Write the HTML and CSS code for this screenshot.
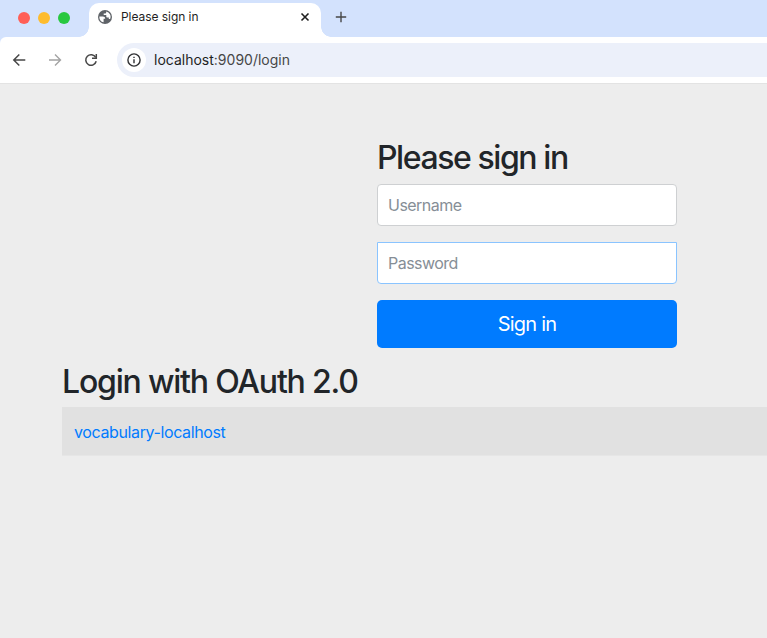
FILE: index.html
```html
<!DOCTYPE html>
<html lang="en">
<head>
<meta charset="utf-8">
<title>Please sign in</title>
<link rel="stylesheet" href="styles.css">
</head>
<body>
<div class="window">
  <header class="tabstrip">
    <div class="lights"><span class="light red"></span><span class="light yellow"></span><span class="light green"></span></div>
    <div class="tab">
      <svg class="globe" width="14" height="14" viewBox="0 0 14 14"><circle cx="7" cy="7" r="7" fill="#5f6368"/><path d="M1.4 6.5h3.4c1.6 0 2.4.9 2.4 2.3H5.6v3.5a5.5 5.5 0 0 1-4.2-5.8zM8.2 1.5v.8c0 .8-.5 1.2-1.3 1.2H5.7v1.4h2.6v1.6c0 .7.5 1.1 1.2 1.1h1.3v1.5h1.3a5.5 5.5 0 0 0-3.9-7.6z" fill="#fff"/></svg>
      <span class="tab-title">Please sign in</span>
      <svg class="close" width="10" height="10" viewBox="0 0 10 10"><path d="M1.5 1.5l7 7M8.5 1.5l-7 7" stroke="#1f1f1f" stroke-width="1.6"/></svg>
    </div>
    <svg class="plus" width="12" height="12" viewBox="0 0 12 12"><path d="M6 .8v10.4M.8 6h10.4" stroke="#474747" stroke-width="1.4"/></svg>
  </header>
  <nav class="toolbar">
    <svg class="nav-icon" width="14" height="14" viewBox="0 0 14 14"><path d="M13.3 7H2M7.3 1.5L1.8 7l5.5 5.5" fill="none" stroke="#474747" stroke-width="1.5"/></svg>
    <svg class="nav-icon" width="14" height="14" viewBox="0 0 14 14"><path d="M1 7h11.3M7 1.5L12.5 7 7 12.5" fill="none" stroke="#a3a3a3" stroke-width="1.4"/></svg>
    <svg class="nav-icon" width="14" height="14" viewBox="0 0 14 14"><path d="M11.7 4.4A5.3 5.3 0 1 0 12.2 8.3" fill="none" stroke="#474747" stroke-width="1.5"/><path d="M12.3 1v4.3H8" fill="none" stroke="#474747" stroke-width="1.5"/></svg>
    <div class="omnibox">
      <span class="site-info"><svg width="14" height="14" viewBox="0 0 14 14"><circle cx="7" cy="7" r="6.1" fill="none" stroke="#303134" stroke-width="1.4"/><path d="M7 6.3v3.9M7 3.7v1.4" stroke="#303134" stroke-width="1.4"/></svg></span>
      <span class="url"><span class="host">localhost</span>:9090/login</span>
    </div>
  </nav>
  <main class="page">
    <form class="signin">
      <h2 class="heading">Please sign in</h2>
      <input class="field username" type="text" placeholder="Username">
      <input class="field password" type="password" placeholder="Password">
      <button class="submit" type="button"><span>Sign in</span></button>
    </form>
    <section class="oauth">
      <h2 class="heading oauth-heading">Login with OAuth 2.0</h2>
      <div class="row"><a class="link" href="#">vocabulary-localhost</a></div>
    </section>
  </main>
</div>
</body>
</html>
```
FILE: styles.css
```css
* { box-sizing: border-box; }
body { margin: 0; background: #ededed; font-family: Inter, "Liberation Sans", sans-serif; color: #212529; }
svg { display: block; flex: none; }
.window { width: 100%; height: 638px; overflow: hidden; }

.tabstrip { display: flex; height: 37px; padding: 3px 0 0 18px; background: #d3e2fd; }
.lights { display: flex; align-items: center; gap: 8px; width: 71px; height: 29px; }
.light { width: 12px; height: 12px; border-radius: 50%; }
.red { background: #ff5f57; }
.yellow { background: #febc2e; }
.green { background: #28c840; }
.tab { position: relative; display: flex; align-items: center; width: 232px; height: 34px; padding: 0 11px 6px 9px; background: #fff; border-radius: 10px 10px 0 0; }
.tab::before, .tab::after { content: ""; position: absolute; bottom: 0; width: 10px; height: 10px; }
.tab::before { left: -10px; background: radial-gradient(circle at 0 0, transparent 9.5px, #fff 10px); }
.tab::after { right: -10px; background: radial-gradient(circle at 100% 0, transparent 9.5px, #fff 10px); }
.tab-title { flex: 1; margin-left: 9px; padding-bottom: 2px; font-size: 12px; letter-spacing: -0.05px; color: #1f1f1f; white-space: nowrap; }
.plus { margin: 8px 0 0 14px; }

.toolbar { display: flex; align-items: center; height: 47px; padding-left: 12px; background: #fff; border-bottom: 1px solid #e3e3e3; border-top-left-radius: 6px; box-shadow: -6px -6px 0 #d3e2fd; }
.nav-icon { margin-right: 22px; }
.nav-icon:nth-child(3) { margin-right: 19px; }
.omnibox { display: flex; flex: 1; align-items: center; height: 34px; padding-left: 5px; background: #ecf0fa; border-radius: 17px 0 0 17px; }
.site-info { display: flex; align-items: center; justify-content: center; width: 24px; height: 24px; border-radius: 50%; background: #fff; }
.url { margin-left: 8px; padding-bottom: 1px; font-size: 14px; color: #474747; white-space: nowrap; }
.host { color: #1f1f1f; }

.page { padding-top: 55px; }
.signin { display: flex; flex-direction: column; width: 300px; margin-left: 377px; }
.heading { margin: 0 0 7px; font-size: 32px; font-weight: 500; line-height: 38px; letter-spacing: -1.42px; white-space: nowrap; }
.field { width: 100%; height: 42px; margin: 0; padding: 0 10px; border: 1px solid #ced0d2; border-radius: 4px; background: #fff; font: 16px Inter, sans-serif; letter-spacing: -0.53px; color: #495057; outline: none; }
.field::placeholder { color: #868e96; opacity: 1; }
.username { margin-bottom: 16px; }
.password { border-color: #8ac4ff; border-radius: 0 0 4px 4px; }
.submit { height: 48px; margin-top: 16px; padding: 0; border: 0; border-radius: 5px; background: #007bff; color: #fff; font: 20px Inter, sans-serif; letter-spacing: -0.8px; }
.oauth { margin: 15px 0 0 62px; }
.oauth-heading { margin-bottom: 6px; letter-spacing: -1.2px; }
.row { display: flex; align-items: center; height: 49px; padding-left: 12px; background: #e1e1e1; border: 0 solid #e6e6e6; border-bottom-width: 1px; }
.link { padding-top: 1px; font-size: 16px; letter-spacing: -0.38px; color: #007bff; text-decoration: none; }
```
